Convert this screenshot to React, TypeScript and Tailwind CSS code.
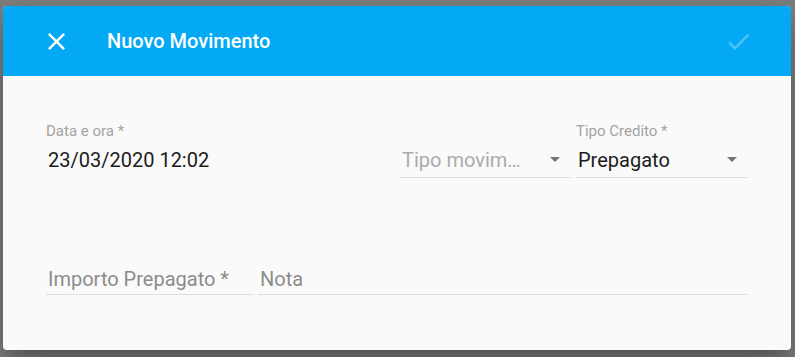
import React from 'react';

interface FieldProps {
  label?: string;
  value: string;
  placeholder?: boolean;
  select?: boolean;
  underline?: boolean;
  className: string;
}

const ArrowDown = () => (
  <svg width="10" height="5" viewBox="0 0 10 5" className="shrink-0">
    <path d="M0 0l5 5 5-5z" fill="#757575" />
  </svg>
);

const Field = ({ label, value, placeholder, select, underline = true, className }: FieldProps) => (
  <div className={`flex flex-col ${className}`}>
    <div className="h-[18px] text-[15px] leading-[18px] text-[#a3a3a3] whitespace-nowrap">{label}</div>
    <div
      className={`mt-[8px] h-[30px] pb-[6px] flex items-center pl-[2px] pr-[11px] ${
        underline ? 'border-b border-[#dedede]' : 'border-b border-transparent'
      }`}
    >
      <span
        className={`flex-1 text-[20px] leading-[24px] whitespace-nowrap overflow-hidden ${
          placeholder ? 'text-[#ababab]' : 'text-[#1c1c1c]'
        }`}
      >
        {value}
      </span>
      {select && <ArrowDown />}
    </div>
  </div>
);

export default function App() {
  return (
    <div
      className="w-[795px] h-[357px] bg-[#808080] pt-[6px] pl-[3px]"
      style={{ fontFamily: 'Roboto, "Liberation Sans", sans-serif' }}
    >
      <div className="w-[788px] h-[344px] rounded-[4px] overflow-hidden flex flex-col bg-[#fafafa] shadow-[0_11px_15px_-7px_rgba(0,0,0,0.2),0_24px_38px_3px_rgba(0,0,0,0.14),0_9px_46px_8px_rgba(0,0,0,0.12)]">
        {/* Header */}
        <div className="h-[70px] bg-[#03a9f4] flex items-center pl-[39px] pr-[38px]">
          <svg width="29" height="29" viewBox="0 0 24 24" className="shrink-0">
            <path
              d="M19 6.41L17.59 5 12 10.59 6.41 5 5 6.41 10.59 12 5 17.59 6.41 19 12 13.41 17.59 19 19 17.59 13.41 12z"
              fill="#ffffff"
            />
          </svg>
          <span className="ml-[36px] text-[20px] leading-[24px] font-medium text-white">Nuovo Movimento</span>
          <div className="flex-1" />
          <svg width="29" height="29" viewBox="0 0 24 24" className="shrink-0">
            <path d="M9 16.17L4.83 12l-1.42 1.41L9 19 21 7l-1.41-1.41z" fill="rgba(255,255,255,0.3)" />
          </svg>
        </div>

        {/* Body */}
        <div className="flex-1 px-[43px] pt-[46px]">
          <div className="flex gap-[5px]">
            <Field className="w-[349px]" label="Data e ora *" value="23/03/2020 12:02" underline={false} />
            <Field className="w-[171px]" value="Tipo movim…" placeholder select />
            <Field className="w-[172px]" label="Tipo Credito *" value="Prepagato" select />
          </div>
          <div className="flex gap-[5px] mt-[62px]">
            <div className="w-[207px] pt-[27px]">
              <div className="h-[28px] pb-[3px] pl-[2px] border-b border-[#dedede] text-[20px] leading-[24px] text-[#8c8c8c] whitespace-nowrap">
                Importo Prepagato *
              </div>
            </div>
            <div className="w-[490px] pt-[27px]">
              <div className="h-[28px] pb-[3px] pl-[2px] border-b border-[#dedede] text-[20px] leading-[24px] text-[#8c8c8c]">
                Nota
              </div>
            </div>
          </div>
        </div>
      </div>
    </div>
  );
}
